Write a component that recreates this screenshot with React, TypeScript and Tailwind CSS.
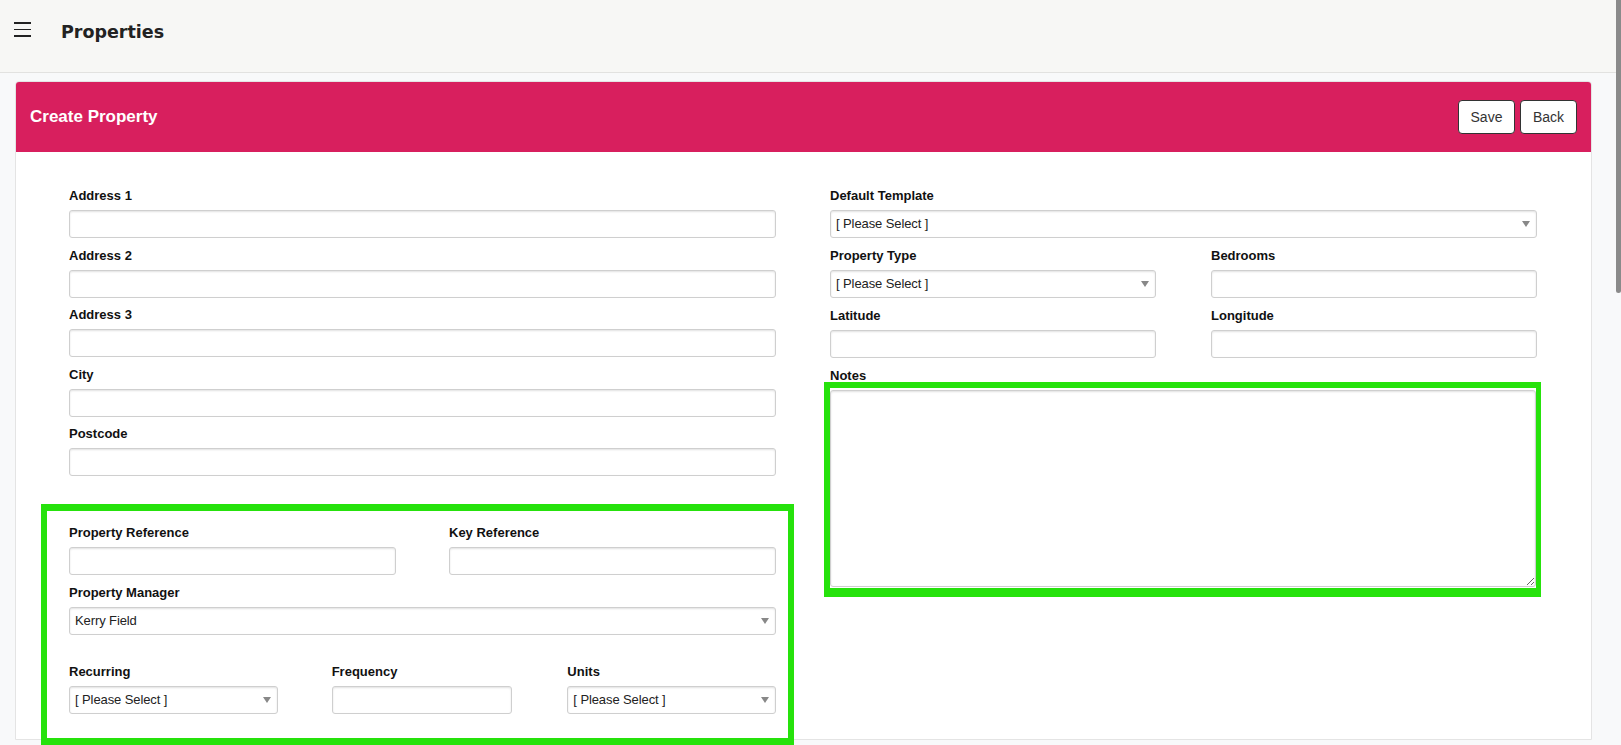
import React from "react";

const font = { fontFamily: '"Liberation Sans", Arial, sans-serif' };

function Label({ children }: { children: React.ReactNode }) {
  return (
    <div className="h-[19px] mb-[5px] text-[13px] leading-[19px] font-bold text-[#111]">
      {children}
    </div>
  );
}

function TextInput() {
  return (
    <input
      type="text"
      className="block w-full h-[28px] rounded-[3px] border border-[#cfcfcf] bg-white shadow-[inset_0_1px_2px_rgba(0,0,0,0.12)] outline-none px-2 text-[13px]"
    />
  );
}

function FakeSelect({ value }: { value: string }) {
  return (
    <div className="relative flex items-center w-full h-[28px] rounded-[3px] border border-[#cfcfcf] bg-white shadow-[inset_0_1px_2px_rgba(0,0,0,0.12)] pl-[5px] text-[13px] text-[#222]">
      <span className="tracking-[-0.1px]">{value}</span>
      <svg
        className="absolute right-[6px] top-1/2 -translate-y-1/2"
        width="8"
        height="6"
        viewBox="0 0 8 6"
      >
        <path d="M0 0 L8 0 L4 6 Z" fill="#888" />
      </svg>
    </div>
  );
}

function Field({
  label,
  children,
}: {
  label: string;
  children: React.ReactNode;
}) {
  return (
    <div>
      <Label>{label}</Label>
      {children}
    </div>
  );
}

export default function App() {
  return (
    <div
      className="relative w-full h-[745px] overflow-hidden bg-[#f8f9fa]"
      style={font}
    >
      {/* Top bar */}
      <div className="h-[73px] bg-[#f7f7f5] border-b border-[#e2e2e0] flex items-start pt-[21px]">
        <div className="ml-[14px] mt-[1px] flex flex-col gap-[5px] w-[17px]">
          <div className="h-[1.6px] bg-[#222]" />
          <div className="h-[1.6px] bg-[#222]" />
          <div className="h-[1.6px] bg-[#222]" />
        </div>
        <div
          className="ml-[30px] mt-[1px] text-[17.5px] leading-[20px] font-bold text-[#222]"
          style={{ fontFamily: '"DejaVu Sans", Verdana, sans-serif' }}
        >
          Properties
        </div>
      </div>

      {/* Main */}
      <div className="pl-[15px] pr-[29px] pt-[8px]">
        <div className="rounded-t-[4px] border border-[#e4e4e4] bg-white overflow-hidden">
          <div className="h-[70px] bg-[#d81f5e] flex items-center justify-between pl-[14px] pr-[14px]">
            <div className="text-[17px] font-bold text-white">
              Create Property
            </div>
            <div className="flex gap-[5px]">
              <button className="w-[57px] h-[34px] rounded-[4px] border border-[#333] bg-white text-[14px] text-[#333]">
                Save
              </button>
              <button className="w-[57px] h-[34px] rounded-[4px] border border-[#333] bg-white text-[14px] text-[#333]">
                Back
              </button>
            </div>
          </div>

          <div className="grid grid-cols-[707px_707px] gap-x-[54px] pl-[53px] pt-[34px] pb-[25px]">
            {/* Left column */}
            <div className="flex flex-col">
              <div className="flex flex-col gap-[7.5px]">
                <Field label="Address 1">
                  <TextInput />
                </Field>
                <Field label="Address 2">
                  <TextInput />
                </Field>
                <Field label="Address 3">
                  <TextInput />
                </Field>
                <Field label="City">
                  <TextInput />
                </Field>
                <Field label="Postcode">
                  <TextInput />
                </Field>
              </div>

              <div className="mt-[47px] flex flex-col">
                <div className="grid grid-cols-[327px_327px] gap-x-[53px]">
                  <Field label="Property Reference">
                    <TextInput />
                  </Field>
                  <Field label="Key Reference">
                    <TextInput />
                  </Field>
                </div>
                <div className="mt-[8px]">
                  <Field label="Property Manager">
                    <FakeSelect value="Kerry Field" />
                  </Field>
                </div>
                <div className="mt-[27px] flex">
                  <div className="w-[209px]">
                    <Field label="Recurring">
                      <FakeSelect value="[ Please Select ]" />
                    </Field>
                  </div>
                  <div className="w-[181px] ml-[54px]">
                    <Field label="Frequency">
                      <TextInput />
                    </Field>
                  </div>
                  <div className="w-[209px] ml-[55px]">
                    <Field label="Units">
                      <FakeSelect value="[ Please Select ]" />
                    </Field>
                  </div>
                </div>
              </div>
            </div>

            {/* Right column */}
            <div className="flex flex-col gap-[8px]">
              <Field label="Default Template">
                <FakeSelect value="[ Please Select ]" />
              </Field>
              <div className="grid grid-cols-[326px_326px] gap-x-[55px]">
                <Field label="Property Type">
                  <FakeSelect value="[ Please Select ]" />
                </Field>
                <Field label="Bedrooms">
                  <TextInput />
                </Field>
              </div>
              <div className="grid grid-cols-[326px_326px] gap-x-[55px]">
                <Field label="Latitude">
                  <TextInput />
                </Field>
                <Field label="Longitude">
                  <TextInput />
                </Field>
              </div>
              <div>
                <Label>Notes</Label>
                <textarea className="block w-[706px] h-[197px] rounded-[3px] border border-[#cfcfcf] bg-white shadow-[inset_0_1px_2px_rgba(0,0,0,0.12)] outline-none resize" />
              </div>
            </div>
          </div>
        </div>
      </div>

      {/* Annotation highlight boxes */}
      <div className="absolute left-[41px] top-[504px] w-[753px] h-[241px] border-l-[6px] border-t-[7px] border-r-[6px] border-b-[7px] border-[#26e20c] pointer-events-none" />
      <div className="absolute left-[824px] top-[382px] w-[717px] h-[215px] border-l-[6px] border-t-[6px] border-r-[5px] border-b-[9px] border-[#26e20c] pointer-events-none" />

      {/* Scrollbar thumb */}
      <div className="absolute right-0 top-0 w-[5px] h-[293px] bg-[#8a8a8a] rounded-b-[3px]" />
    </div>
  );
}
